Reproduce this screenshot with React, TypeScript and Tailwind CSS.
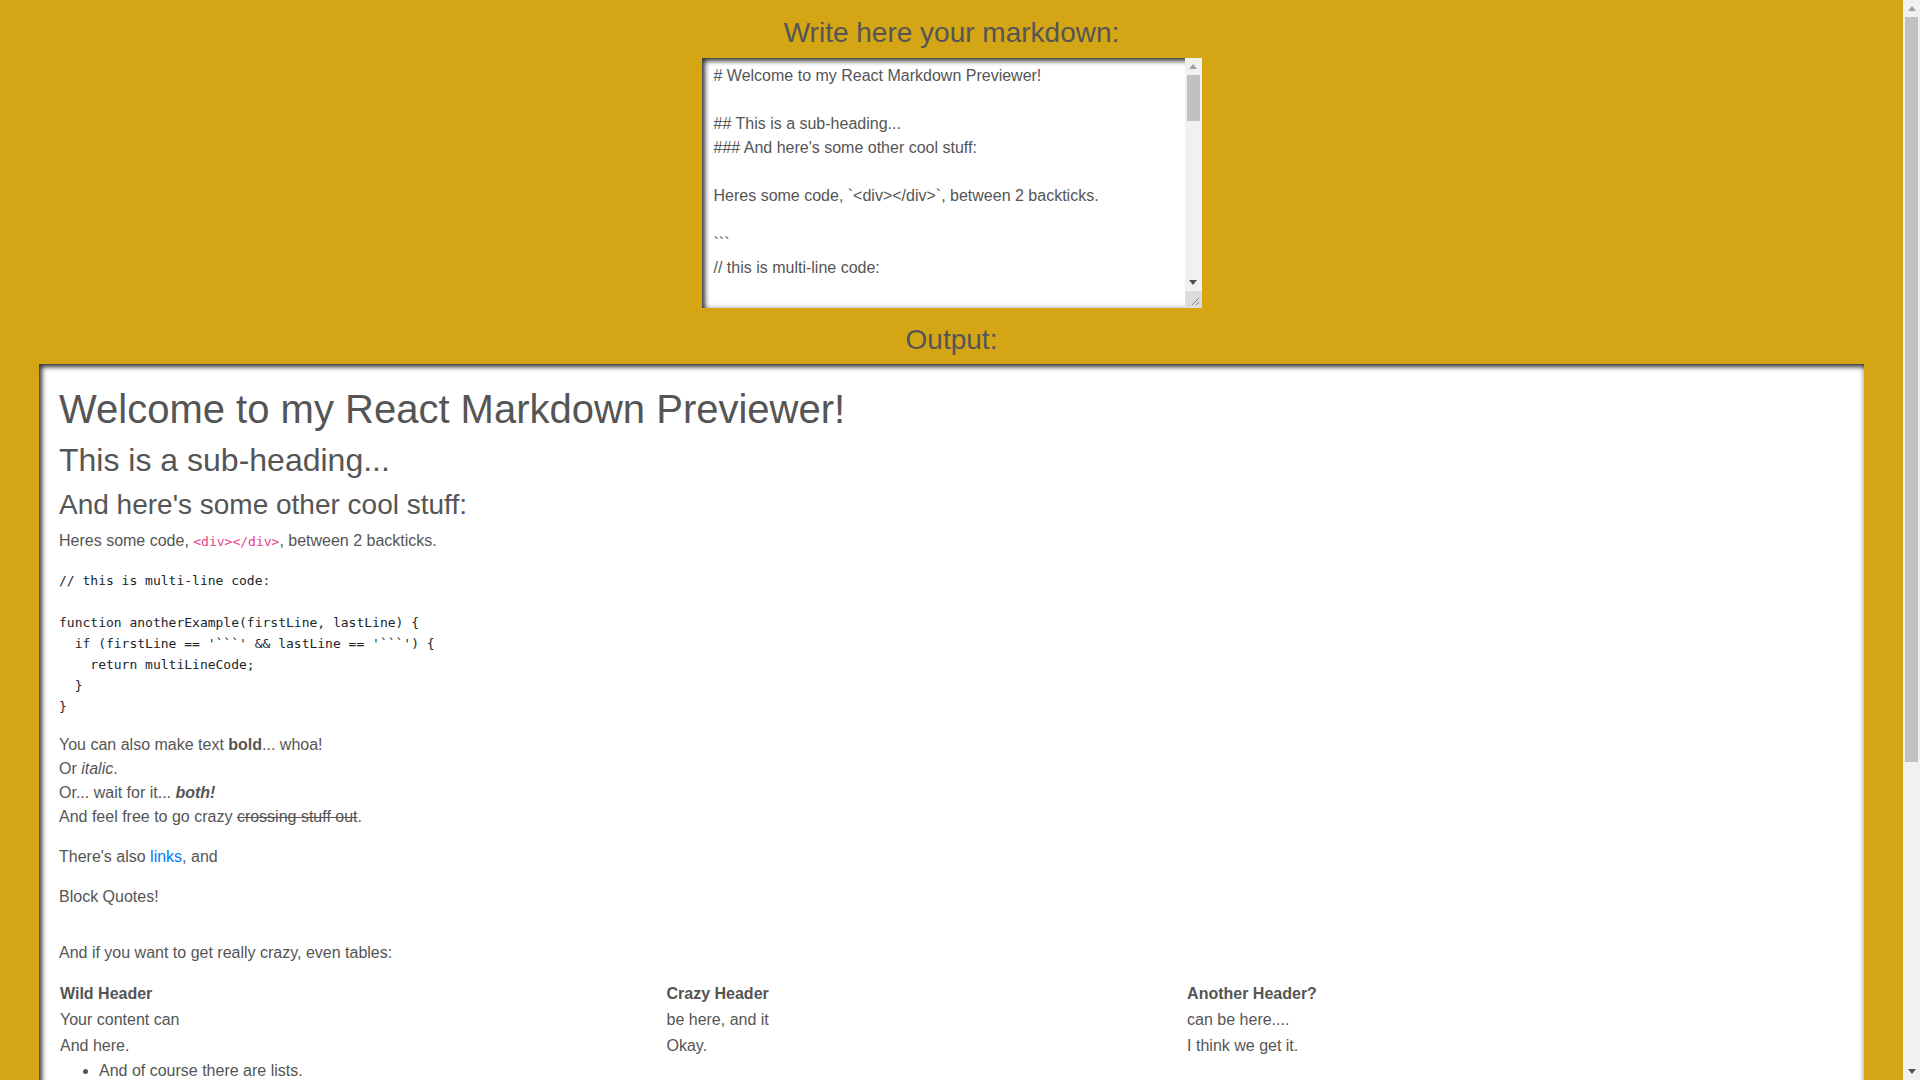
const markdown = [
  "# Welcome to my React Markdown Previewer!",
  "",
  "## This is a sub-heading...",
  "### And here's some other cool stuff:",
  "",
  "Heres some code, `<div></div>`, between 2 backticks.",
  "",
  "```",
  "// this is multi-line code:",
  "",
  "function anotherExample(firstLine, lastLine) {",
  "  if (firstLine == '```' && lastLine == '```') {",
  "    return multiLineCode;",
  "  }",
  "}",
  "```",
  "",
  "You can also make text **bold**... whoa!",
  "Or _italic_.",
  "Or... wait for it... **_both!_**",
  "And feel free to go crazy ~~crossing stuff out~~.",
  "",
  "There's also [links](https://www.freecodecamp.org), and",
  "> Block Quotes!",
  "",
  "And if you want to get really crazy, even tables:",
  "",
  "Wild Header | Crazy Header | Another Header?",
  "------------ | ------------- | -------------",
  "Your content can | be here, and it | can be here....",
  "And here. | Okay. | I think we get it.",
  "",
  "- And of course there are lists.",
  "  - Some are bulleted.",
  "     - With different indentation levels.",
  "        - That look like this.",
  "",
  "1. And there are numbered lists too.",
  "1. Use just 1s if you want!",
  "1. And last but not least, let's not forget embedded images:",
  "",
  "![freeCodeCamp Logo](https://cdn.freecodecamp.org/testable-projects-fcc/images/fcc_secondary.svg)",
].join("\n");

const codeBlock = [
  "// this is multi-line code:",
  "",
  "function anotherExample(firstLine, lastLine) {",
  "  if (firstLine == '```' && lastLine == '```') {",
  "    return multiLineCode;",
  "  }",
  "}",
].join("\n");

const mono = "font-['DejaVu_Sans_Mono','Liberation_Mono',monospace]";

function Arrow({ up, color }: { up?: boolean; color: string }) {
  return (
    <div className="h-[17px] flex items-center justify-center">
      <svg width="8" height="5" viewBox="0 0 8 5">
        <path d={up ? "M0 5 L4 0 L8 5 Z" : "M0 0 L4 5 L8 0 Z"} fill={color} />
      </svg>
    </div>
  );
}

function ScrollBar({ thumb, corner }: { thumb: number; corner?: boolean }) {
  return (
    <div className="relative w-[17px] bg-[#f1f1f1] flex flex-col shrink-0">
      <Arrow up color="#a3a3a3" />
      <div className="flex-1 px-[2px]">
        <div className="bg-[#c1c1c1] w-full" style={{ height: thumb }} />
      </div>
      <Arrow color="#505050" />
      {corner && (
        <div className="h-[17px] bg-[#dcdcdc] flex items-end justify-end p-[2px]">
          <svg width="10" height="10" viewBox="0 0 10 10">
            <path d="M9 2 L2 9 M9 6 L6 9" stroke="#8a8a8a" strokeWidth="1" />
          </svg>
        </div>
      )}
    </div>
  );
}

export default function App() {
  return (
    <div className="flex h-screen overflow-hidden bg-[#d4a515] font-['Liberation_Sans',Arial,sans-serif] text-[#555]">
      <main className="flex-1 overflow-hidden pt-[16px] pb-[20px]">
        <h3 className="text-center text-[28px] leading-[1.2] font-normal mb-2">Write here your markdown:</h3>
        <div className="flex justify-center">
          <div className="flex w-[500px] h-[250px] bg-white shadow-[inset_3px_3px_5px_rgba(0,0,0,0.8),inset_-1px_-2px_4px_rgba(0,0,0,0.15)]">
            <textarea
              defaultValue={markdown}
              className="flex-1 resize-none overflow-hidden bg-transparent px-[12px] pt-[6px] pb-[4px] text-[16px] leading-6 text-[#555] outline-none"
            />
            <ScrollBar thumb={46} corner />
          </div>
        </div>
        <h3 className="text-center text-[28px] leading-[1.2] font-normal mt-[15px] mb-2">Output:</h3>

        <div className="mx-[39px] bg-white px-[20px] pt-[21px] pb-[20px] shadow-[inset_3px_3px_5px_rgba(0,0,0,0.8),inset_-2px_-1px_4px_rgba(0,0,0,0.2)]">
          <h1 className="text-[40px] leading-[1.2] font-normal mb-2">Welcome to my React Markdown Previewer!</h1>
          <h2 className="text-[32px] leading-[1.2] font-normal mb-2">This is a sub-heading...</h2>
          <h3 className="text-[28px] leading-[1.2] font-normal mb-2">And here's some other cool stuff:</h3>
          <p className="text-[16px] leading-6 mb-4">
            Heres some code, <code className={`${mono} text-[13px] text-[#e83e8c]`}>{"<div></div>"}</code>, between 2 backticks.
          </p>
          <pre className={`${mono} text-[13px] leading-[21px] text-[#212529] mb-4`}>{codeBlock}</pre>
          <p className="text-[16px] leading-6 mb-4">
            You can also make text <strong className="font-bold">bold</strong>... whoa!
            <br />
            Or <em className="italic">italic</em>.
            <br />
            Or... wait for it... <strong className="font-bold"><em className="italic">both!</em></strong>
            <br />
            And feel free to go crazy <del className="line-through">crossing stuff out</del>.
          </p>
          <p className="text-[16px] leading-6 mb-4">
            There's also <a className="text-[#007bff]">links</a>, and
          </p>
          <blockquote className="pb-4 mb-4">
            <p className="text-[16px] leading-6">Block Quotes!</p>
          </blockquote>
          <p className="text-[16px] leading-6 mb-4">And if you want to get really crazy, even tables:</p>

          <table className="w-full border-collapse text-[16px] leading-6">
            <thead>
              <tr>
                <th className="p-[1px] text-left font-bold">Wild Header</th>
                <th className="p-[1px] text-left font-bold">Crazy Header</th>
                <th className="p-[1px] text-left font-bold">Another Header?</th>
              </tr>
            </thead>
            <tbody>
              <tr>
                <td className="p-[1px]">Your content can</td>
                <td className="p-[1px]">be here, and it</td>
                <td className="p-[1px]">can be here....</td>
              </tr>
              <tr>
                <td className="p-[1px]">And here.</td>
                <td className="p-[1px]">Okay.</td>
                <td className="p-[1px]">I think we get it.</td>
              </tr>
            </tbody>
          </table>

          <ul className="list-disc pl-10 text-[16px] leading-6 mb-4">
            <li>And of course there are lists.</li>
          </ul>
        </div>
      </main>
      <ScrollBar thumb={745} />
    </div>
  );
}
